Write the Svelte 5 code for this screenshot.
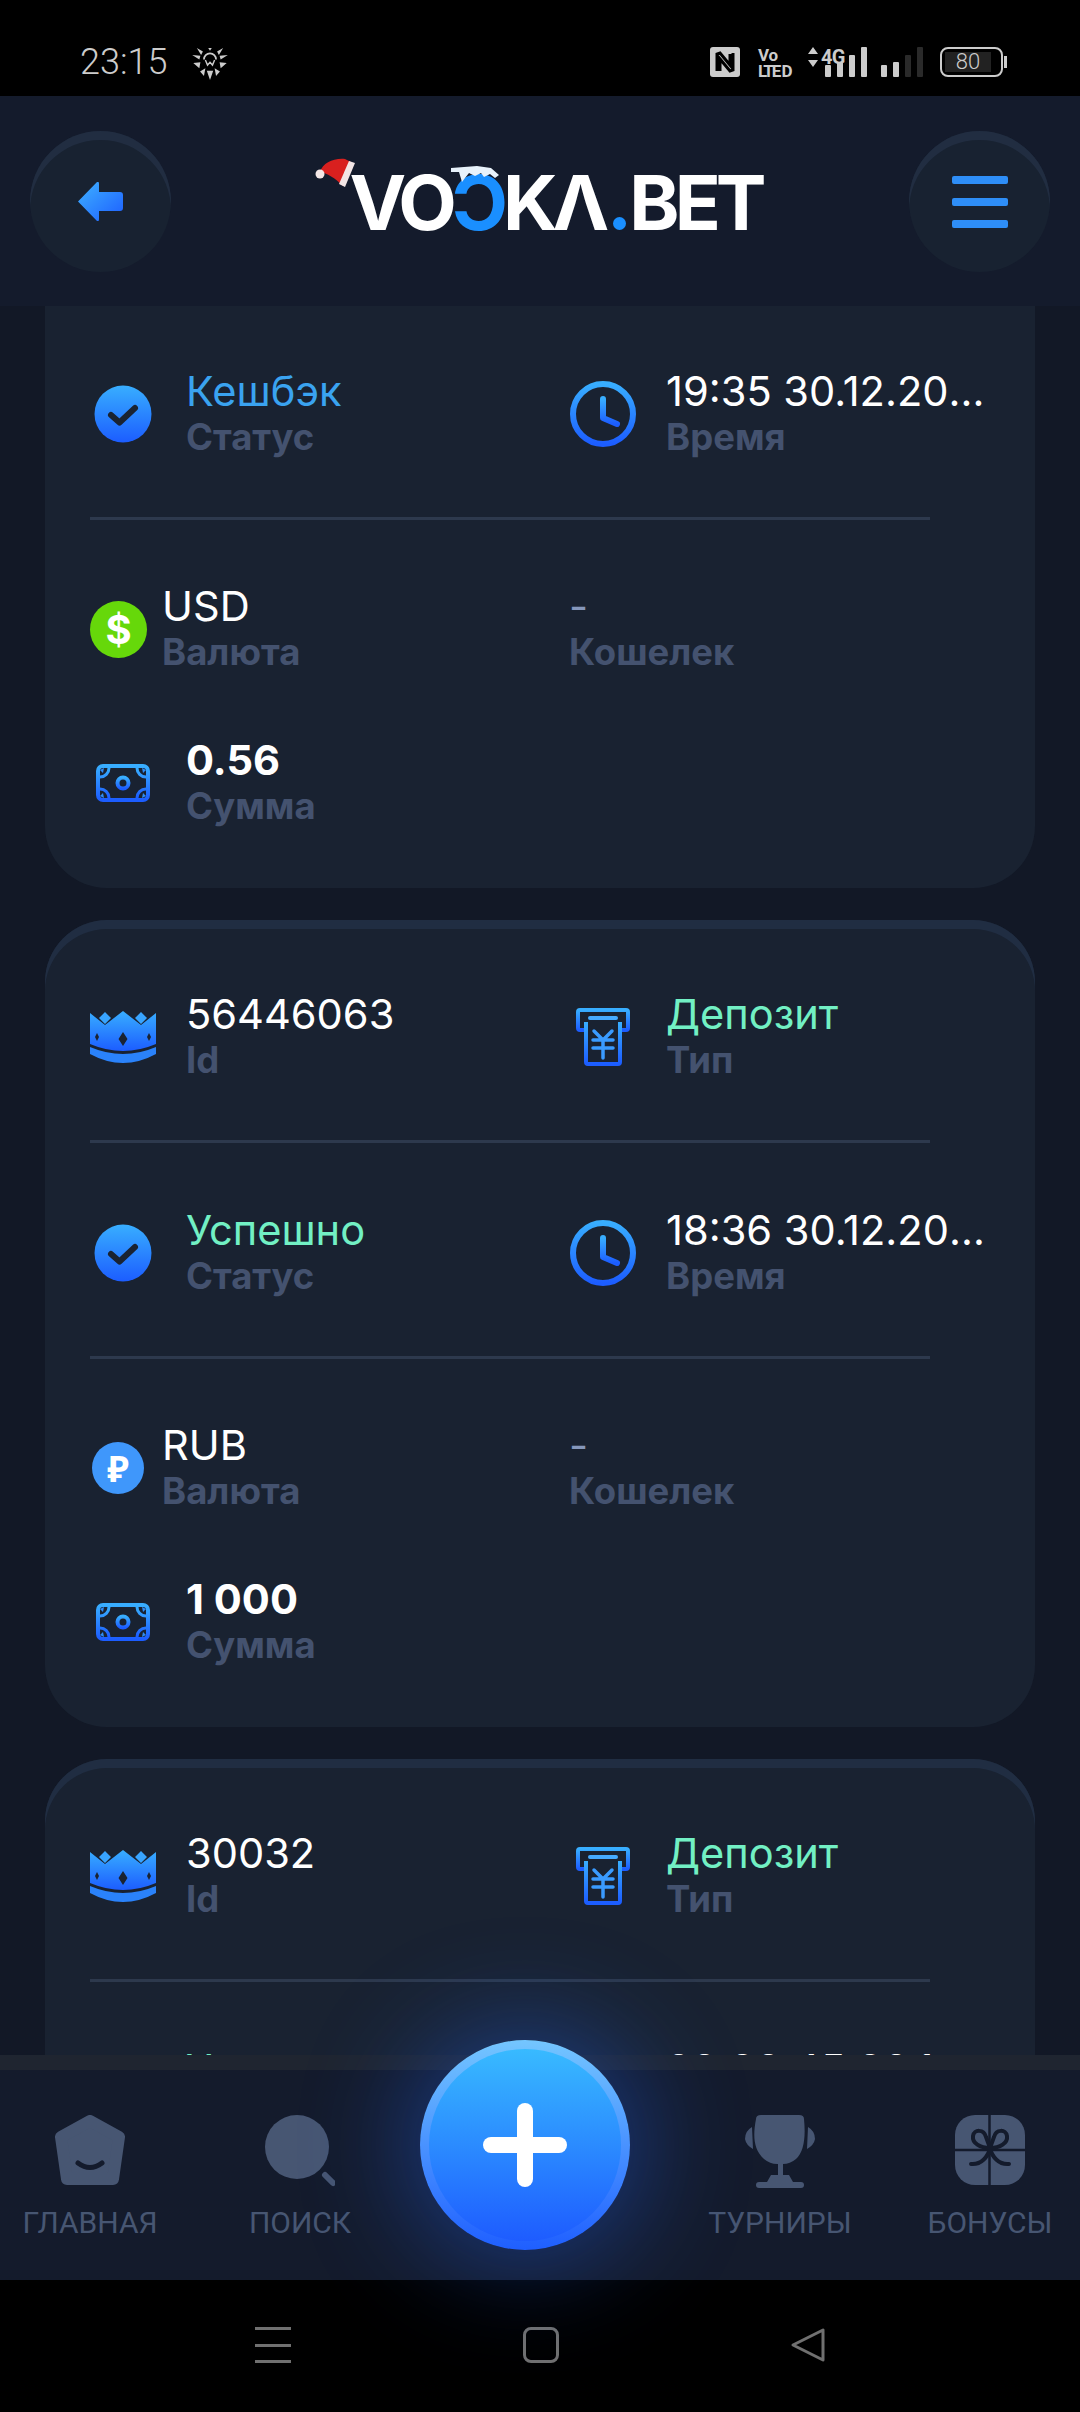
<script>
  const cards = [
    { id: '', status: 'Кешбэк', tone: 'blue', time: '19:35 30.12.2022', cur: 'USD', sum: '0.56' },
    { id: '56446063', status: 'Успешно', tone: 'mint', time: '18:36 30.12.2022', cur: 'RUB', sum: '1 000' },
    { id: '30032', status: 'Успешно', tone: 'mint', time: '20:30:45 30.12.2022', cur: 'RUB', sum: '500' }
  ];
  const signal = [12, 15, 22, 30];
</script>

{#snippet check()}
  <svg class="ic" width="58" height="58" viewBox="0 0 58 58">
    <circle cx="29" cy="29" r="28.5" fill="url(#blueV)" />
    <path d="M17 30l8.500 7.500L41 23" fill="none" stroke="#1a2332" stroke-width="6" stroke-linecap="round" stroke-linejoin="round" />
  </svg>
{/snippet}

{#snippet clock()}
  <svg class="ic" width="66" height="66" viewBox="0 0 66 66">
    <circle cx="33" cy="33" r="30" fill="none" stroke="url(#blueV)" stroke-width="6" />
    <path d="M33 18v19l14 6" fill="none" stroke="url(#blueV)" stroke-width="6" stroke-linecap="round" stroke-linejoin="round" />
  </svg>
{/snippet}

{#snippet crown()}
  <svg class="ic" width="66" height="52" viewBox="0 0 66 52">
    <path d="M0 2l15 12L33 0l18 14L66 2v31q-33 14-66 0z" fill="url(#blueV)" />
    <path d="M15 1l6 6-6 6-6-6zM51 1l6 6-6 6-6-6z" fill="#38a4ff" />
    <path d="M0 36q33 14 66 0v7q-33 18-66 0z" fill="#2a82fa" />
    <path d="M33 21l4.500 7-4.500 7-4.500-7zM7 22l2 4-2 4-2-4zM59 22l2 4-2 4-2-4z" fill="#1a2332" />
  </svg>
{/snippet}

{#snippet receipt()}
  <svg class="ic" width="54" height="58" viewBox="0 0 54 58">
    <path d="M8 22H4q-2 0-2-2V4q0-2 2-2h46q2 0 2 2v16q0 2-2 2h-4" fill="none" stroke="url(#blueV)" stroke-width="4" />
    <path d="M10 14v40q0 2 2 2h30q2 0 2-2V14" fill="none" stroke="url(#blueV)" stroke-width="4" />
    <rect x="12" y="8" width="30" height="4" rx="2" fill="#45aaff" />
    <path d="M18 23l9 9 9-9M27 32v18M17 32h20M17 40h20" fill="none" stroke="#3a9bff" stroke-width="3.500" stroke-linecap="round" />
  </svg>
{/snippet}

{#snippet money()}
  <svg class="ic" width="54" height="38" viewBox="0 0 54 38">
    <rect x="2" y="2" width="50" height="34" rx="5" fill="none" stroke="url(#blueV)" stroke-width="4" />
    <circle cx="27" cy="19" r="5.500" fill="none" stroke="url(#blueV)" stroke-width="4" />
    <path d="M4 13c5 0 9-4 9-9M50 13c-5 0-9-4-9-9M4 25c5 0 9 4 9 9M50 25c-5 0-9 4-9 9" fill="none" stroke="url(#blueV)" stroke-width="3" />
    <path d="M4 6l4-2-1 5zM50 6l-4-2 1 5zM4 32l4 2-1-5zM50 32l-4 2 1-5z" fill="#2f8cf5" />
  </svg>
{/snippet}

<div class="page">
  <svg class="defs" width="0" height="0">
    <defs>
      <linearGradient id="blueV" x1="0" y1="0" x2="0" y2="1">
        <stop offset="0" stop-color="#38aeff" />
        <stop offset="1" stop-color="#1c5dff" />
      </linearGradient>
      <linearGradient id="arrowG" x1="0" y1="0" x2="1" y2="1">
        <stop offset="0" stop-color="#3fb2ff" />
        <stop offset="1" stop-color="#1c5dff" />
      </linearGradient>
    </defs>
  </svg>

  <div class="status">
    <span class="clock">23:15</span>
    <svg class="spider" width="36" height="32" viewBox="25 28 100 90">
      <path d="M38 28l17 10-5 10zM112 28L95 38l5 10zM70 28h10l-5 8zM25 48l23 2-3 10zM125 48l-23 2 3 10zM28 70l20-2-3 17zM122 70l-20-2 3 17zM47 94l15-9-4 22zM103 94l-15-9 4 22zM66 92h18l-9 26z" fill="#ccc" />
      <path d="M58 60a17 17 0 0 1 34 0" fill="none" stroke="#ccc" stroke-width="5" />
      <path d="M62 62l6 14 7-8 7 8 6-14" fill="none" stroke="#ccc" stroke-width="4" />
    </svg>
    <div class="status-right">
      <svg width="30" height="30" viewBox="0 0 30 30">
        <rect width="30" height="30" rx="3" fill="#ccc" />
        <path d="M7 24V7l3-1 10 12V7M23 6v17l-3 1L10 12v12" fill="none" stroke="#000" stroke-width="3" />
      </svg>
      <div class="volte"><span>Vo</span><span>LTE D</span></div>
      <div class="net">
        <svg width="10" height="20" viewBox="0 0 10 20" fill="#ccc"><path d="M5 0l5 7H0zM5 20l5-7H0z" /></svg>
        <span class="g4">4G</span>
      </div>
      <div class="bars first">
        {#each signal as h}
          <i style="height:{h}px"></i>
        {/each}
      </div>
      <div class="bars second">
        {#each signal as h, n}
          <i class:dim={n > 1} style="height:{h}px"></i>
        {/each}
      </div>
      <div class="battery"><div class="cell"><span>80</span></div></div>
      <div class="tip"></div>
    </div>
  </div>

  <header>
    <button class="round" aria-label="Назад">
      <svg width="45" height="39" viewBox="0 0 45 39">
        <path d="M0 19.500L19 0q2-1 2 2v8h21q3 0 3 3v13q0 3-3 3H21v8q0 3-2 2z" fill="url(#arrowG)" />
      </svg>
    </button>
    <div class="logo">
      <svg class="hat" width="44" height="30" viewBox="0 0 44 30">
        <path d="M5 14C8 5 18 0 30 1l6 3-8 24C20 20 12 15 5 14z" fill="#d9201f" />
        <path d="M34 3l6 2-10 24-6-3z" fill="#f3e6e6" />
        <circle cx="5" cy="16" r="4.500" fill="#f3e6e6" />
      </svg>
      <span>VO</span><span class="d">Ɔ</span><span>KΛ</span><i class="dot"></i><span>BET</span>
      <svg class="snow" width="50" height="18" viewBox="0 0 50 18">
        <path d="M0 2L26 0l14 2 8 7-4 3-5-4-6 3-3-4-6 3-6-3-4 5-3 4-3-10H0z" fill="#e8f2fb" />
      </svg>
    </div>
    <button class="round" aria-label="Меню">
      <span class="burger"><i></i><i></i><i></i></span>
    </button>
  </header>

  <main>
    <div class="list">
      {#each cards as c}
        <section class="card">
          <div class="row">
            <div class="cell-item">
              <span class="ic-box">{@render crown()}</span>
              <div class="txt"><div class="val">{c.id}</div><div class="lab">Id</div></div>
            </div>
            <div class="cell-item">
              <span class="ic-box pad-r">{@render receipt()}</span>
              <div class="txt"><div class="val mint">Депозит</div><div class="lab">Тип</div></div>
            </div>
          </div>
          <div class="divider"></div>
          <div class="row">
            <div class="cell-item">
              <span class="ic-box pad-c">{@render check()}</span>
              <div class="txt"><div class="val {c.tone}">{c.status}</div><div class="lab">Статус</div></div>
            </div>
            <div class="cell-item">
              <span class="ic-box">{@render clock()}</span>
              <div class="txt"><div class="val ell">{c.time}</div><div class="lab">Время</div></div>
            </div>
          </div>
          <div class="divider second-div"></div>
          <div class="row">
            <div class="cell-item">
              {#if c.cur === 'USD'}
                <span class="coin green">$</span>
              {:else}
                <span class="coin rub">₽</span>
              {/if}
              <div class="txt"><div class="val">{c.cur}</div><div class="lab">Валюта</div></div>
            </div>
            <div class="cell-item">
              <div class="txt"><div class="val dash">-</div><div class="lab">Кошелек</div></div>
            </div>
          </div>
          <div class="row sum">
            <div class="cell-item">
              <span class="ic-box pad-m">{@render money()}</span>
              <div class="txt"><div class="val bold">{c.sum}</div><div class="lab">Сумма</div></div>
            </div>
          </div>
        </section>
      {/each}
    </div>
  </main>

  <nav>
    <div class="tab">
      <svg width="70" height="74" viewBox="0 0 70 74">
        <path d="M35 6L64 22 58 64H12L6 22z" fill="#475672" stroke="#475672" stroke-width="12" stroke-linejoin="round" />
        <path d="M23 48q12 9 24 0" fill="none" stroke="#141b2c" stroke-width="5" stroke-linecap="round" />
      </svg>
      <span>ГЛАВНАЯ</span>
    </div>
    <div class="tab">
      <svg width="70" height="74" viewBox="0 0 70 74">
        <circle cx="32" cy="32" r="32" fill="#475672" />
        <path d="M60 60l8 8" stroke="#475672" stroke-width="6" stroke-linecap="round" />
      </svg>
      <span>ПОИСК</span>
    </div>
    <div class="tab-gap"></div>
    <div class="tab shifted">
      <svg width="70" height="74" viewBox="0 0 70 74" fill="#475672">
        <path d="M11 4q0-4 5-4h38q5 0 5 4 3 30-8 40-6 5-13 5h-6q-7 0-13-5C8 34 8 20 11 4z" />
        <path d="M7 12L8 34Q1 30 0 24q0-8 7-12zM63 12L62 34q7-4 8-10 0-8-7-12z" />
        <path d="M33 48h5v12h-5zM26 60h18l4 7H22z" />
        <rect x="11" y="67" width="48" height="6" rx="3" />
      </svg>
      <span>ТУРНИРЫ</span>
    </div>
    <div class="tab">
      <svg width="70" height="74" viewBox="0 0 70 74">
        <rect width="70" height="70" rx="20" fill="#475672" />
        <path d="M34.500 0v70M0 35h70" stroke="#141b2c" stroke-width="2.500" />
        <path d="M35 33C25 33 17 28 18 21 19 14 29 14 31 22L35 33C45 33 53 28 52 21 51 14 41 14 39 22L35 33C33 42 26 50 16 49M35 33C37 42 44 50 54 49" fill="none" stroke="#141b2c" stroke-width="4" stroke-linecap="round" />
      </svg>
      <span>БОНУСЫ</span>
    </div>
    <button class="plus" aria-label="Пополнить">
      <span class="plus-inner"><i></i><i></i></span>
    </button>
  </nav>

  <div class="android">
    <span class="a-menu"><i></i><i></i><i></i></span>
    <span class="a-square"></span>
    <svg width="36" height="36" viewBox="0 0 36 36">
      <path d="M33 3v30L3 18z" fill="none" stroke="#707070" stroke-width="3" stroke-linejoin="round" />
    </svg>
  </div>
</div>

<style>
  :global(body) {
    margin: 0;
    background: #000;
  }

  .page {
    width: 1080px;
    height: 2412px;
    display: flex;
    flex-direction: column;
    overflow: hidden;
    font-family: Inter, "Noto Sans", sans-serif;
  }

  .defs {
    display: block;
    height: 0;
  }

  .status {
    height: 96px;
    flex: none;
    background: #000;
    display: flex;
    align-items: flex-start;
    padding: 47px 73px 0 80px;
    box-sizing: border-box;
    color: #ccc;
    font-family: Roboto, sans-serif;
  }

  .clock {
    font-size: 36px;
    font-weight: 300;
    line-height: 30px;
  }

  .spider {
    margin-left: 25px;
    margin-top: 1px;
  }

  .status-right {
    margin-left: auto;
    display: flex;
    align-items: flex-start;
    height: 30px;
  }

  .volte {
    margin-left: 18px;
    width: 36px;
    display: flex;
    flex-direction: column;
    font-size: 17px;
    font-weight: 700;
    line-height: 16px;
    white-space: nowrap;
  }

  .volte span:last-child {
    letter-spacing: -2px;
  }

  .net {
    margin-left: 14px;
    display: flex;
    gap: 3px;
    height: 20px;
  }

  .g4 {
    font-size: 20px;
    font-weight: 700;
    line-height: 20px;
    letter-spacing: -0.5px;
  }

  .bars {
    display: flex;
    align-items: flex-end;
    gap: 6px;
    height: 30px;
  }

  .bars i {
    width: 6px;
    background: #ccc;
    border-radius: 1px;
  }

  .bars i.dim {
    background: #2a2a2a;
  }

  .bars.first {
    margin-left: -20px;
  }

  .bars.second {
    margin-left: 14px;
  }

  .battery {
    margin-left: 17px;
    width: 63px;
    height: 30px;
    box-sizing: border-box;
    border: 2px solid #ccc;
    border-radius: 8px;
    padding: 3px;
  }

  .cell {
    width: 46px;
    height: 100%;
    background: #222;
    display: flex;
    align-items: center;
    justify-content: center;
    font-size: 22px;
    line-height: 20px;
    font-weight: 300;
  }

  .tip {
    width: 3px;
    height: 12px;
    background: #ccc;
    margin: 9px 0 0 1px;
  }

  header {
    height: 210px;
    flex: none;
    background: #141b2c;
    box-sizing: border-box;
    padding: 35px 30px 0;
    display: flex;
    justify-content: space-between;
    align-items: flex-start;
  }

  .round {
    width: 141px;
    height: 141px;
    border: none;
    padding: 0;
    border-radius: 50%;
    background: #182231;
    box-shadow: inset 0 9px 0 #212d41;
    display: flex;
    align-items: center;
    justify-content: center;
  }

  .burger {
    display: flex;
    flex-direction: column;
    gap: 14px;
    width: 56px;
  }

  .burger i {
    height: 8px;
    border-radius: 2px;
    background: #2e8ef7;
  }

  .logo {
    position: relative;
    display: flex;
    align-items: baseline;
    margin: 33px 0 0 31px;
    height: 76px;
    font-size: 76px;
    font-weight: 700;
    line-height: 76px;
    color: #fff;
    letter-spacing: -5px;
    white-space: nowrap;
  }

  .d {
    color: #1a8fff;
  }

  .dot {
    width: 13px;
    height: 13px;
    margin: 0 3px 0 9px;
    border-radius: 50%;
    background: #1a8fff;
  }

  .hat {
    position: absolute;
    left: -34px;
    top: -6px;
  }

  .snow {
    position: absolute;
    left: 102px;
    top: 2px;
  }

  main {
    flex: 1;
    min-height: 0;
    overflow: hidden;
    background: #121826;
  }

  .list {
    margin-top: -225px;
    padding: 0 45px;
    display: flex;
    flex-direction: column;
    gap: 32px;
  }

  .card {
    height: 807px;
    flex: none;
    box-sizing: border-box;
    padding: 71px 0 0 45px;
    border-radius: 62px;
    background: #192231;
    box-shadow: inset 0 9px 0 #202d42;
  }

  .row {
    display: grid;
    grid-template-columns: 480px 1fr;
    height: 90px;
  }

  .row.sum {
    margin-top: 64px;
  }

  .divider {
    width: 840px;
    height: 3px;
    background: #2d394d;
    margin: 59px 0 64px;
  }

  .second-div {
    margin: 59px 0 63px;
  }

  .cell-item {
    display: flex;
    align-items: center;
    min-width: 0;
  }

  .ic-box {
    width: 97px;
    height: 90px;
    flex: none;
    box-sizing: border-box;
    display: flex;
    align-items: center;
  }

  .pad-c {
    padding-left: 4px;
  }

  .pad-r {
    padding-left: 6px;
  }

  .pad-m {
    padding-left: 6px;
  }

  .ic {
    display: block;
  }

  .coin {
    width: 57px;
    height: 57px;
    flex: none;
    border-radius: 50%;
    margin-right: 16px;
    display: flex;
    align-items: center;
    justify-content: center;
    color: #fff;
    font-size: 40px;
    font-weight: 700;
  }

  .green {
    background: #66d80a;
  }

  .rub {
    width: 52px;
    height: 52px;
    margin: 0 19px 0 2px;
    background: #3f97fb;
    font-size: 36px;
    font-family: "Noto Sans", Roboto, sans-serif;
  }

  .txt {
    min-width: 0;
    flex: 1;
    margin-left: -1px;
  }

  .val {
    height: 46px;
    font-size: 41.600px;
    line-height: 46px;
    color: #fff;
    white-space: nowrap;
  }

  .ell {
    width: 326px;
    overflow: hidden;
    text-overflow: ellipsis;
  }

  .mint {
    color: #72f0c4;
  }

  .blue {
    color: #3aa3f0;
  }

  .bold {
    font-weight: 700;
  }

  .dash {
    color: #8597bb;
  }

  .lab {
    height: 46px;
    font-size: 36.500px;
    line-height: 46px;
    font-weight: 700;
    color: #44526f;
  }

  nav {
    height: 225px;
    flex: none;
    box-sizing: border-box;
    border-top: 15px solid #1f2530;
    background: #141b2c;
    padding-top: 45px;
    display: grid;
    grid-template-columns: 180px 180px 210px 210px 180px;
    column-gap: 30px;
    position: relative;
    align-items: start;
  }

  .tab {
    display: flex;
    flex-direction: column;
    align-items: center;
    gap: 16px;
    color: #475672;
    font-family: Roboto, sans-serif;
    font-size: 30px;
    line-height: 36px;
    white-space: nowrap;
  }

  .tab svg {
    display: block;
  }

  .shifted {
    padding-left: 30px;
  }

  .plus {
    position: absolute;
    left: 420px;
    top: -30px;
    width: 210px;
    height: 210px;
    padding: 9px;
    border: none;
    border-radius: 50%;
    background: linear-gradient(#74c6ff, #1f5fff);
    box-shadow: 0 0 110px 10px rgba(35, 105, 255, 0.42);
    box-sizing: border-box;
  }

  .plus-inner {
    display: block;
    position: relative;
    width: 100%;
    height: 100%;
    border-radius: 50%;
    background: linear-gradient(#38baff, #1e5cff);
  }

  .plus-inner i {
    position: absolute;
    background: #fff;
    border-radius: 8px;
  }

  .plus-inner i:first-child {
    left: 54px;
    top: 88px;
    width: 84px;
    height: 16px;
  }

  .plus-inner i:last-child {
    left: 88px;
    top: 54px;
    width: 16px;
    height: 84px;
  }

  .android {
    height: 132px;
    flex: none;
    background: #000;
    box-sizing: border-box;
    padding: 47px 0 0 255px;
    display: flex;
    align-items: flex-start;
  }

  .a-menu {
    width: 36px;
    height: 36px;
    display: flex;
    flex-direction: column;
    justify-content: space-between;
  }

  .a-menu i {
    height: 3px;
    background: #707070;
  }

  .a-square {
    width: 36px;
    height: 36px;
    box-sizing: border-box;
    margin-left: 232px;
    border: 3px solid #707070;
    border-radius: 8px;
  }

  .android svg {
    margin-left: 231px;
  }
</style>
